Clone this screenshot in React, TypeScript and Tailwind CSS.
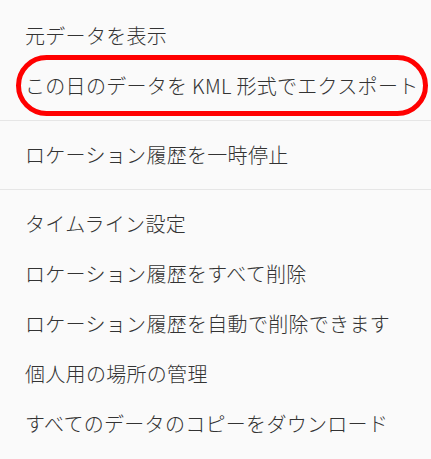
import React from "react";

const firstGroup = ["元データを表示", "この日のデータを KML 形式でエクスポート"];
const secondGroup = ["ロケーション履歴を一時停止"];
const thirdGroup = [
  "タイムライン設定",
  "ロケーション履歴をすべて削除",
  "ロケーション履歴を自動で削除できます",
  "個人用の場所の管理",
  "すべてのデータのコピーをダウンロード",
];

const Item = ({ label, marked }: { label: string; marked?: boolean }) => (
  <div className="relative flex h-[50px] items-center px-[25px]">
    <span className="whitespace-nowrap">{label}</span>
    {marked && (
      <div className="absolute left-[16px] right-[3px] top-[-6px] bottom-[-5px] rounded-full border-[5px] border-[#ff0000]" />
    )}
  </div>
);

export default function App() {
  return (
    <div
      className="min-h-[459px] w-[431px] overflow-hidden bg-[#fafafa] pt-[11px] text-[20px] font-light tracking-[0.3px] text-[#333333]"
      style={{ fontFamily: '"Noto Sans CJK JP", "Noto Sans", sans-serif' }}
    >
      {firstGroup.map((t, i) => (
        <Item key={t} label={t} marked={i === 1} />
      ))}
      <div className="my-[9px] h-px bg-[#e6e6e6]" />
      {secondGroup.map((t) => (
        <Item key={t} label={t} />
      ))}
      <div className="my-[9px] h-px bg-[#e6e6e6]" />
      {thirdGroup.map((t) => (
        <Item key={t} label={t} />
      ))}
    </div>
  );
}
